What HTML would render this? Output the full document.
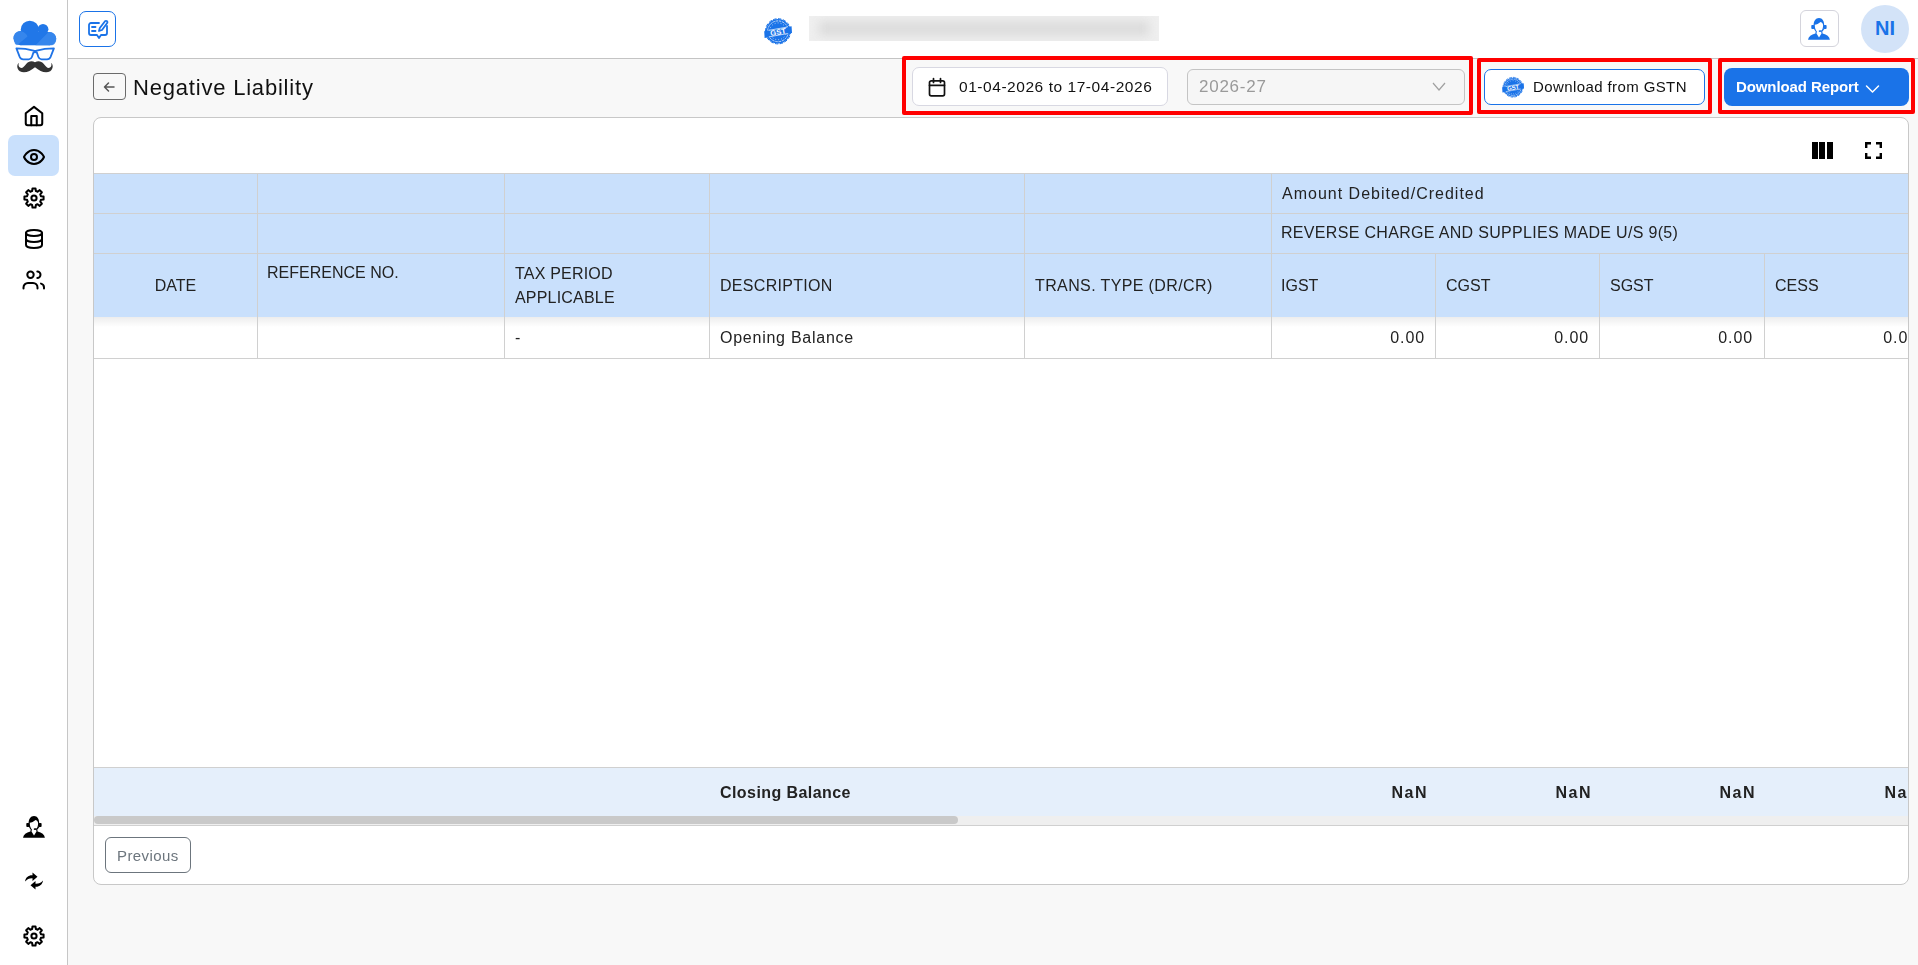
<!DOCTYPE html>
<html><head><meta charset="utf-8">
<style>
*{box-sizing:border-box;margin:0;padding:0}
html,body{width:1918px;height:965px;overflow:hidden}
.t{will-change:transform}
body{background:#f8f8f8;font-family:"Liberation Sans",sans-serif;color:#212121;position:relative}
.abs{position:absolute}
#sidebar{left:0;top:0;width:68px;height:965px;background:#fff;border-right:1px solid #c6c6c6}
#topbar{left:68px;top:0;width:1850px;height:59px;background:#fff;border-bottom:1px solid #c4c4c4}
.ico{position:absolute;overflow:visible}
.redbox{position:absolute;border:4px solid #f00;border-radius:2px}
.t{position:absolute;white-space:nowrap;font-size:15px;line-height:20px;color:#222}
.vl{position:absolute;width:1px;background:#d0d0d0}
.hl{position:absolute;height:1px;background:#d0d0d0}
</style></head>
<body>
<!-- SIDEBAR -->
<div id="sidebar" class="abs"></div>
<!-- logo -->
<svg class="ico" style="left:13px;top:20px" width="44" height="54" viewBox="0 0 44 54">
  <g fill="#2177e8">
    <circle cx="7.6" cy="18.2" r="7.1"/>
    <circle cx="16.8" cy="9.8" r="9.1"/>
    <circle cx="30" cy="9.3" r="5.4"/>
    <circle cx="36.6" cy="18.6" r="6.6"/>
    <rect x="7.6" y="12" width="29" height="13.3"/>
  </g>
  <path d="M0.5 18 C1 12 5 11 8.5 11.2 C12 12.5 14 14.5 14.5 16.5 L4 25.3 L2 24 Z" fill="#3a88ec" opacity=".85"/>
  <path d="M22.5 25.3 L35.5 12 C40 12 43.5 15 43.2 19.5 C43 23 41 25.3 38 25.3 Z" fill="#3a88ec" opacity=".85"/>
  <path d="M3.4 28.3 Q13 28.3 20.5 30.6 Q22.15 31.2 23.8 30.6 Q31.3 28.3 40.9 28.3 L37.6 36.8 Q36.6 39.2 34 39.3 L28.5 39.3 Q26.2 39.2 25.4 37 L23.9 32.6 Q22.15 31.8 20.4 32.6 L18.9 37 Q18.1 39.2 15.8 39.3 L10.3 39.3 Q7.7 39.2 6.7 36.8 Z" fill="none" stroke="#1f73e6" stroke-width="1.8" stroke-linejoin="round"/>
  <path d="M22 42.3 C19 40.3 15.5 41 13.2 44 C11 47 9.2 48.7 7 47.6 C5.6 46.8 5.2 45 5.8 43 C3.8 44.2 3.4 48.8 6.8 51.2 C11.5 54 16.8 51.2 22 47.2 C27.2 51.2 32.5 54 37.2 51.2 C40.6 48.8 40.2 44.2 38.2 43 C38.8 45 38.4 46.8 37 47.6 C34.8 48.7 33 47 30.8 44 C28.5 41 25 40.3 22 42.3 Z" fill="#333"/>
</svg>
<!-- active bg -->
<div class="abs" style="left:8px;top:135px;width:51px;height:41px;background:#c9e0fc;border-radius:7px"></div>
<!-- home -->
<svg class="ico" style="left:23px;top:105px" width="22" height="22" viewBox="0 0 24 24" fill="none" stroke="#000" stroke-width="2.2" stroke-linecap="round" stroke-linejoin="round"><path d="M3 9l9-7 9 7v11a2 2 0 0 1-2 2H5a2 2 0 0 1-2-2z"/><path d="M9 22V12h6v10"/></svg>
<!-- eye -->
<svg class="ico" style="left:22px;top:145px" width="24" height="24" viewBox="0 0 24 24" fill="none" stroke="#000" stroke-width="2" stroke-linecap="round" stroke-linejoin="round"><path d="M2 12s3-7 10-7 10 7 10 7-3 7-10 7-10-7-10-7Z"/><circle cx="12" cy="12" r="3"/></svg>
<!-- gear -->
<svg class="ico" style="left:22px;top:186px" width="24" height="24" viewBox="0 0 24 24" fill="none" stroke="#000" stroke-width="2" stroke-linejoin="round"><path d="M10.14 5.05L10.48 2.42L13.52 2.42L13.86 5.05A7.2 7.2 0 0 1 15.60 5.76L17.70 4.15L19.85 6.30L18.24 8.40A7.2 7.2 0 0 1 18.95 10.14L21.58 10.48L21.58 13.52L18.95 13.86A7.2 7.2 0 0 1 18.24 15.60L19.85 17.70L17.70 19.85L15.60 18.24A7.2 7.2 0 0 1 13.86 18.95L13.52 21.58L10.48 21.58L10.14 18.95A7.2 7.2 0 0 1 8.40 18.24L6.30 19.85L4.15 17.70L5.76 15.60A7.2 7.2 0 0 1 5.05 13.86L2.42 13.52L2.42 10.48L5.05 10.14A7.2 7.2 0 0 1 5.76 8.40L4.15 6.30L6.30 4.15L8.40 5.76A7.2 7.2 0 0 1 10.14 5.05Z"/><circle cx="12" cy="12" r="2.6"/></svg>
<!-- database -->
<svg class="ico" style="left:22px;top:227px" width="24" height="24" viewBox="0 0 24 24" fill="none" stroke="#000" stroke-width="2" stroke-linecap="round" stroke-linejoin="round"><ellipse cx="12" cy="6" rx="8" ry="3"/><path d="M4 6v6a8 3 0 0 0 16 0V6"/><path d="M4 12v6a8 3 0 0 0 16 0v-6"/></svg>
<!-- users -->
<svg class="ico" style="left:22.4px;top:268.4px" width="24" height="24" viewBox="0 0 24 24" fill="none" stroke="#000" stroke-width="2" stroke-linecap="round" stroke-linejoin="round"><circle cx="8.5" cy="6.8" r="3.2"/><path d="M1.5 20.5v-1a4.5 4.5 0 0 1 4.5-4.5h5a4.5 4.5 0 0 1 4.5 4.5v1"/><path d="M15.3 3.6a3.2 3.2 0 0 1 0 6.4"/><path d="M22 20.5v-1a4 4 0 0 0-3-3.9"/></svg>
<!-- support bottom -->
<svg class="ico" style="left:17.7px;top:810px" width="32" height="32" viewBox="0 0 32 32"><path fill="#000" d="M10.6 14 C10.4 9 12.6 6 16 6 C19.4 6 21.4 9 21.2 14 C21.1 16.8 20.2 18.6 19.3 19.6 L19.6 21.6 C23.9 22.6 26.4 24.6 26.9 27.7 L5 27.7 C5.6 24.6 8.1 22.6 12.4 21.6 L12.7 19.6 C11.7 18.4 10.7 16.8 10.6 14 Z"/><path fill="#fff" d="M11.7 12.7 C13.6 12.3 15.6 11.6 17.6 9.9 C19.2 10.3 20.1 11.6 20.1 13.6 C20.1 16.2 19.2 18.2 18.1 19.4 L18.5 21.5 L16 25.4 L13.5 21.5 L13.9 19.4 C12.6 18 11.7 16 11.7 12.7 Z"/><rect x="8.3" y="12.9" width="3.1" height="4.1" rx=".9" fill="#000"/><rect x="20.5" y="12.9" width="3.1" height="4.1" rx=".9" fill="#000"/><path d="M21.3 16.4 C20.8 18 19.4 19 17.2 19.1" fill="none" stroke="#000" stroke-width="1"/><ellipse cx="16.9" cy="19.1" rx="1.2" ry=".9" fill="#000"/></svg>
<!-- sync -->
<svg class="ico" style="left:24px;top:872px" width="20" height="18" viewBox="0 0 20 18"><path fill="#000" d="M1 9.5C1.5 5.5 4.5 3 8.5 3.2V0.5L13.5 4.8 8.5 9V6.2C5.5 6 3 7.2 1 9.5z"/><path fill="#000" d="M19 8.5C18.5 12.5 15.5 15 11.5 14.8v2.7L6.5 13.2 11.5 9v2.8c3 .2 5.5-1 7.5-3.3z"/></svg>
<!-- gear bottom -->
<svg class="ico" style="left:22px;top:924px" width="24" height="24" viewBox="0 0 24 24" fill="none" stroke="#000" stroke-width="2" stroke-linejoin="round"><path d="M10.14 5.05L10.48 2.42L13.52 2.42L13.86 5.05A7.2 7.2 0 0 1 15.60 5.76L17.70 4.15L19.85 6.30L18.24 8.40A7.2 7.2 0 0 1 18.95 10.14L21.58 10.48L21.58 13.52L18.95 13.86A7.2 7.2 0 0 1 18.24 15.60L19.85 17.70L17.70 19.85L15.60 18.24A7.2 7.2 0 0 1 13.86 18.95L13.52 21.58L10.48 21.58L10.14 18.95A7.2 7.2 0 0 1 8.40 18.24L6.30 19.85L4.15 17.70L5.76 15.60A7.2 7.2 0 0 1 5.05 13.86L2.42 13.52L2.42 10.48L5.05 10.14A7.2 7.2 0 0 1 5.76 8.40L4.15 6.30L6.30 4.15L8.40 5.76A7.2 7.2 0 0 1 10.14 5.05Z"/><circle cx="12" cy="12" r="2.6"/></svg>

<!-- TOPBAR -->
<div id="topbar" class="abs"></div>
<div class="abs" style="left:79px;top:11px;width:37px;height:36px;border:1.5px solid #1a73e8;border-radius:7px;background:#fff"></div>
<svg class="ico" style="left:87px;top:19px" width="22" height="21" viewBox="0 0 22 21" fill="none" stroke="#1a73e8" stroke-width="1.8" stroke-linecap="round" stroke-linejoin="round">
  <path d="M12 4H4a2 2 0 0 0-2 2v8a2 2 0 0 0 2 2h6l2 3 2-3h4a2 2 0 0 0 2-2V7"/>
  <path d="M5 8h3.5M5 12h3.5"/>
  <path d="M18 2.2a1.4 1.4 0 0 1 2 2L15 11l-3 1 .8-3z"/>
</svg>
<!-- GST logo -->
<svg class="ico" style="left:764px;top:17px" width="28" height="28" viewBox="0 0 28 28">
  <circle cx="14" cy="14.3" r="12.2" fill="#1a73e8"/>
  <circle cx="14" cy="14.3" r="12.6" fill="none" stroke="#1a73e8" stroke-width="1" stroke-dasharray="2.6 2.35" stroke-linecap="round"/>
  <circle cx="14" cy="14.3" r="10.4" fill="none" stroke="#fff" stroke-width=".7" stroke-dasharray="2.5 .8"/>
  <circle cx="14" cy="14.3" r="8.4" fill="none" stroke="#fff" stroke-width=".8" stroke-dasharray=".8 2.2"/>
  <path d="M0.2 14.2 L27.6 9.2 L28 16 L0.6 21 Z" fill="#1a73e8"/>
  <path d="M4.5 13.4 L23.5 10 M4.8 19.9 L23.8 16.5" stroke="#fff" stroke-width=".7"/>
  <text x="14" y="17.6" transform="rotate(-10 14 14.5)" font-family="Liberation Sans" font-size="7.6" font-weight="bold" fill="#fff" text-anchor="middle">GST</text>
</svg>
<!-- blurred name -->
<div class="abs" style="left:809px;top:16px;width:350px;height:25px;background:#efefef;overflow:hidden">
  <div class="abs" style="left:10px;top:5px;width:330px;height:15px;background:#dcdcdc;filter:blur(5px)"></div>
</div>
<!-- support btn -->
<div class="abs" style="left:1800px;top:10px;width:39px;height:37px;border:1px solid #d4d4dc;border-radius:6px;background:#fff"></div>
<svg class="ico" style="left:1802.8px;top:11.5px" width="32" height="32" viewBox="0 0 32 32"><path fill="#1a73e8" d="M10.6 14 C10.4 9 12.6 6 16 6 C19.4 6 21.4 9 21.2 14 C21.1 16.8 20.2 18.6 19.3 19.6 L19.6 21.6 C23.9 22.6 26.4 24.6 26.9 27.7 L5 27.7 C5.6 24.6 8.1 22.6 12.4 21.6 L12.7 19.6 C11.7 18.4 10.7 16.8 10.6 14 Z"/><path fill="#fff" d="M11.7 12.7 C13.6 12.3 15.6 11.6 17.6 9.9 C19.2 10.3 20.1 11.6 20.1 13.6 C20.1 16.2 19.2 18.2 18.1 19.4 L18.5 21.5 L16 25.4 L13.5 21.5 L13.9 19.4 C12.6 18 11.7 16 11.7 12.7 Z"/><rect x="8.3" y="12.9" width="3.1" height="4.1" rx=".9" fill="#1a73e8"/><rect x="20.5" y="12.9" width="3.1" height="4.1" rx=".9" fill="#1a73e8"/><path d="M21.3 16.4 C20.8 18 19.4 19 17.2 19.1" fill="none" stroke="#1a73e8" stroke-width="1"/><ellipse cx="16.9" cy="19.1" rx="1.2" ry=".9" fill="#1a73e8"/></svg>
<!-- avatar -->
<div class="abs" style="left:1861px;top:5px;width:48px;height:48px;border-radius:50%;background:#d3e3f8;color:#1a73e8;font-weight:bold;font-size:20px;line-height:46px;text-align:center">NI</div>

<!-- PAGE HEADER -->
<div class="abs" style="left:93px;top:73px;width:33px;height:27px;border:1px solid #6b6b6b;border-radius:4px"></div>
<svg class="ico" style="left:102px;top:80px" width="14" height="14" viewBox="0 0 14 14" fill="none" stroke="#555" stroke-width="1.5" stroke-linecap="round" stroke-linejoin="round"><path d="M12 7H2.5M6.5 3L2.5 7l4 4"/></svg>
<div class="t" style="left:133px;top:75px;font-size:22px;line-height:26px;color:#111;letter-spacing:.8px">Negative Liability</div>

<!-- red boxes -->
<div class="redbox" style="left:902px;top:56px;width:571px;height:59px"></div>
<div class="redbox" style="left:1477px;top:58px;width:235px;height:56px"></div>
<div class="redbox" style="left:1718px;top:58px;width:197px;height:56px"></div>

<!-- date picker -->
<div class="abs" style="left:912px;top:67px;width:256px;height:39px;border:1px solid #d8d8e2;border-radius:7px;background:#fff"></div>
<svg class="ico" style="left:927px;top:77px" width="20" height="20" viewBox="0 0 20 20" fill="none" stroke="#111" stroke-width="1.7" stroke-linecap="round" stroke-linejoin="round"><rect x="2.5" y="3.8" width="15" height="15" rx="1.8"/><path d="M2.5 8.3h15M6.5 1.5v4M13.5 1.5v4"/></svg>
<div class="t" style="left:959px;top:77px;font-size:15.5px;color:#111;letter-spacing:.55px">01-04-2026 to 17-04-2026</div>
<!-- year select -->
<div class="abs" style="left:1187px;top:69px;width:278px;height:36px;border:1px solid #c4c4c4;border-radius:6px;background:#f6f6f6"></div>
<div class="t" style="left:1199px;top:77px;font-size:17px;line-height:20px;color:#9a9a9a;letter-spacing:.75px">2026-27</div>
<svg class="ico" style="left:1432px;top:81px" width="14" height="11" viewBox="0 0 14 11" fill="none" stroke="#a0a0a0" stroke-width="1.2"><path d="M1 2l6 7 6-7"/></svg>
<!-- GSTN button -->
<div class="abs" style="left:1484px;top:69px;width:221px;height:36px;border:1px solid #1a73e8;border-radius:7px;background:#fff"></div>
<svg class="ico" style="left:1502px;top:76px" width="22" height="22" viewBox="0 0 28 28">
  <circle cx="14" cy="14.3" r="12.2" fill="#1a73e8"/>
  <circle cx="14" cy="14.3" r="12.6" fill="none" stroke="#1a73e8" stroke-width="1" stroke-dasharray="2.6 2.35" stroke-linecap="round"/>
  <circle cx="14" cy="14.3" r="10.4" fill="none" stroke="#fff" stroke-width=".7" stroke-dasharray="2.5 .8"/>
  <circle cx="14" cy="14.3" r="8.4" fill="none" stroke="#fff" stroke-width=".8" stroke-dasharray=".8 2.2"/>
  <path d="M0.2 14.2 L27.6 9.2 L28 16 L0.6 21 Z" fill="#1a73e8"/>
  <path d="M4.5 13.4 L23.5 10 M4.8 19.9 L23.8 16.5" stroke="#fff" stroke-width=".7"/>
  <text x="14" y="17.6" transform="rotate(-10 14 14.5)" font-family="Liberation Sans" font-size="7.6" font-weight="bold" fill="#fff" text-anchor="middle">GST</text>
</svg>
<div class="t" style="left:1533px;top:77px;color:#111;letter-spacing:.4px">Download from GSTN</div>
<!-- Download report -->
<div class="abs" style="left:1724px;top:68px;width:185px;height:38px;border-radius:8px;background:#1a73e8"></div>
<div class="t" style="left:1736px;top:77px;color:#fff;font-weight:bold;letter-spacing:-.1px">Download Report</div>
<svg class="ico" style="left:1865px;top:84px" width="15" height="10" viewBox="0 0 15 10" fill="none" stroke="#fff" stroke-width="1.5" stroke-linecap="round" stroke-linejoin="round"><path d="M1.5 2l6 6 6-6"/></svg>

<!-- CARD -->
<div class="abs" id="card" style="left:93px;top:117px;width:1816px;height:768px;background:#fff;border:1px solid #c8c8c8;border-radius:8px;overflow:hidden">
  <!-- toolbar icons -->
  <div class="abs" style="left:1718px;top:24px;width:6px;height:17px;background:#000"></div>
  <div class="abs" style="left:1725px;top:24px;width:6px;height:17px;background:#000"></div>
  <div class="abs" style="left:1733px;top:24px;width:6px;height:17px;background:#000"></div>
  <svg class="ico" style="left:1771px;top:24px" width="17" height="17" viewBox="0 0 17 17" fill="none" stroke="#000" stroke-width="2.4"><path d="M1.2 6V1.2H6M11 1.2h4.8V6M15.8 11v4.8H11M6 15.8H1.2V11"/></svg>
  <!-- header bg -->
  <div class="abs" style="left:0;top:55px;width:1840px;height:1px;background:#d0d0d0"></div>
  <div class="abs" style="left:0;top:56px;width:1840px;height:143px;background:#c9e0fc"></div>
  <div class="hl" style="left:0;top:95px;width:1840px"></div>
  <div class="hl" style="left:0;top:135px;width:1840px"></div>
  <!-- shadow -->
  <div class="abs" style="left:0;top:199px;width:1840px;height:10px;background:linear-gradient(rgba(0,0,0,.07),rgba(0,0,0,0))"></div>
  <!-- verticals full (header+data) -->
  <div class="vl" style="left:163px;top:56px;height:184px"></div>
  <div class="vl" style="left:410px;top:56px;height:184px"></div>
  <div class="vl" style="left:615px;top:56px;height:184px"></div>
  <div class="vl" style="left:930px;top:56px;height:184px"></div>
  <div class="vl" style="left:1177px;top:56px;height:184px"></div>
  <div class="vl" style="left:1341px;top:135px;height:105px"></div>
  <div class="vl" style="left:1505px;top:135px;height:105px"></div>
  <div class="vl" style="left:1670px;top:135px;height:105px"></div>
  <div class="hl" style="left:0;top:240px;width:1840px"></div>
  <!-- header text -->
  <div class="t" style="left:1188px;top:66px;font-size:16px;letter-spacing:1px">Amount Debited/Credited</div>
  <div class="t" style="left:1187px;top:105px;font-size:16px;letter-spacing:.32px">REVERSE CHARGE AND SUPPLIES MADE U/S 9(5)</div>
  <div class="t" style="left:0;width:163px;text-align:center;top:158px;font-size:16px">DATE</div>
  <div class="t" style="left:173px;top:145px;font-size:16px;letter-spacing:0px">REFERENCE NO.</div>
  <div class="t" style="left:421px;top:146px;font-size:16px;letter-spacing:.2px">TAX PERIOD</div>
  <div class="t" style="left:421px;top:170px;font-size:16px;letter-spacing:.2px">APPLICABLE</div>
  <div class="t" style="left:626px;top:158px;font-size:16px;letter-spacing:.3px">DESCRIPTION</div>
  <div class="t" style="left:941px;top:158px;font-size:16px;letter-spacing:.38px">TRANS. TYPE (DR/CR)</div>
  <div class="t" style="left:1187px;top:158px;font-size:16px;letter-spacing:0px">IGST</div>
  <div class="t" style="left:1352px;top:158px;font-size:16px;letter-spacing:0px">CGST</div>
  <div class="t" style="left:1516px;top:158px;font-size:16px;letter-spacing:0px">SGST</div>
  <div class="t" style="left:1681px;top:158px;font-size:16px;letter-spacing:0px">CESS</div>
  <!-- data row -->
  <div class="t" style="left:421px;top:210px;font-size:16px">-</div>
  <div class="t" style="left:626px;top:210px;font-size:16px;letter-spacing:.75px">Opening Balance</div>
  <div class="t" style="left:1231px;width:100px;text-align:right;top:210px;font-size:16px;letter-spacing:.9px">0.00</div>
  <div class="t" style="left:1395px;width:100px;text-align:right;top:210px;font-size:16px;letter-spacing:.9px">0.00</div>
  <div class="t" style="left:1559px;width:100px;text-align:right;top:210px;font-size:16px;letter-spacing:.9px">0.00</div>
  <div class="t" style="left:1724px;width:100px;text-align:right;top:210px;font-size:16px;letter-spacing:.9px">0.00</div>
  <!-- footer -->
  <div class="hl" style="left:0;top:649px;width:1840px"></div>
  <div class="abs" style="left:0;top:650px;width:1840px;height:48px;background:#e5effb"></div>
  <div class="abs" style="left:0;top:698px;width:1840px;height:9px;background:#efefef"></div>
  <div class="abs" style="left:0;top:698px;width:864px;height:8px;background:#c9c9c9;border-radius:4px"></div>
  <div class="hl" style="left:0;top:707px;width:1840px"></div>
  <div class="t" style="left:626px;top:665px;font-size:16px;font-weight:bold;letter-spacing:.43px">Closing Balance</div>
  <div class="t" style="left:1234px;width:100px;text-align:right;top:665px;font-size:16px;font-weight:bold;letter-spacing:1.5px">NaN</div>
  <div class="t" style="left:1398px;width:100px;text-align:right;top:665px;font-size:16px;font-weight:bold;letter-spacing:1.5px">NaN</div>
  <div class="t" style="left:1562px;width:100px;text-align:right;top:665px;font-size:16px;font-weight:bold;letter-spacing:1.5px">NaN</div>
  <div class="t" style="left:1727px;width:100px;text-align:right;top:665px;font-size:16px;font-weight:bold;letter-spacing:1.5px">NaN</div>
  <!-- previous -->
  <div class="abs" style="left:11px;top:719px;width:86px;height:36px;border:1px solid #6c757d;border-radius:6px"></div>
  <div class="t" style="left:23px;top:728px;color:#6c757d;letter-spacing:.4px">Previous</div>
</div>
</body></html>
